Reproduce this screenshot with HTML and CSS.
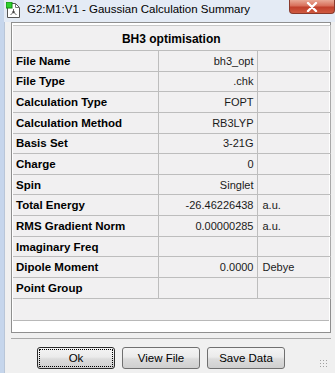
FILE: index.html
```html
<!DOCTYPE html>
<html lang="en">
<head>
    <meta charset="UTF-8">
    <title>G2:M1:V1 - Gaussian Calculation Summary</title>
    <link rel="stylesheet" href="styles.css">
</head>
<body>
    <div class="window">
        <div class="titlebar">
            <svg class="app-icon" width="15" height="17" viewBox="0 0 15 17">
                <path d="M1.5 1.5h8l4 4v10h-12z" fill="#fff" stroke="#555"/>
                <path d="M9.5 1.5v4h4" fill="none" stroke="#777"/>
                <line x1="7.5" y1="7" x2="7.5" y2="10" stroke="#666"/>
                <line x1="7.5" y1="10" x2="4.5" y2="13" stroke="#666"/>
                <line x1="7.5" y1="10" x2="10.5" y2="13" stroke="#666"/>
                <circle cx="7.5" cy="10" r="1.2" fill="#444"/>
                <rect x="0" y="0" width="6" height="6" fill="#2fd12f" stroke="#138a13"/>
            </svg>
            <span class="title-text">G2:M1:V1 - Gaussian Calculation Summary</span>
            <div class="close-btn">
                <svg width="12" height="10" viewBox="0 0 12 10">
                    <path d="M2 1l8 8M10 1l-8 8" stroke="#fff" stroke-width="2.4" stroke-linecap="round"/>
                </svg>
            </div>
        </div>

        <div class="client">
            <div class="summary-frame">
                <div class="grid-area">
                    <table class="summary">
                        <colgroup>
                            <col class="col-label">
                            <col class="col-value">
                            <col class="col-unit">
                        </colgroup>
                        <tr><th colspan="3" class="head">BH3 optimisation</th></tr>
                        <tr><td class="label">File Name</td><td class="value">bh3_opt</td><td class="unit"></td></tr>
                        <tr><td class="label">File Type</td><td class="value">.chk</td><td class="unit"></td></tr>
                        <tr><td class="label">Calculation Type</td><td class="value">FOPT</td><td class="unit"></td></tr>
                        <tr><td class="label">Calculation Method</td><td class="value">RB3LYP</td><td class="unit"></td></tr>
                        <tr><td class="label">Basis Set</td><td class="value">3-21G</td><td class="unit"></td></tr>
                        <tr><td class="label">Charge</td><td class="value">0</td><td class="unit"></td></tr>
                        <tr><td class="label">Spin</td><td class="value">Singlet</td><td class="unit"></td></tr>
                        <tr><td class="label">Total Energy</td><td class="value">-26.46226438</td><td class="unit">a.u.</td></tr>
                        <tr><td class="label">RMS Gradient Norm</td><td class="value">0.00000285</td><td class="unit">a.u.</td></tr>
                        <tr><td class="label">Imaginary Freq</td><td class="value"></td><td class="unit"></td></tr>
                        <tr><td class="label">Dipole Moment</td><td class="value">0.0000</td><td class="unit">Debye</td></tr>
                        <tr><td class="label">Point Group</td><td class="value"></td><td class="unit"></td></tr>
                    </table>
                </div>
            </div>

            <div class="separator"></div>

            <div class="button-row">
                <button class="btn btn-focus">Ok</button>
                <button class="btn">View File</button>
                <button class="btn">Save Data</button>
                <span class="grip"></span>
            </div>
        </div>
    </div>
</body>
</html>
```

FILE: styles.css
```css
* {
    margin: 0;
    padding: 0;
    box-sizing: border-box;
}

body {
    width: 335px;
    height: 373px;
    overflow: hidden;
    background: #f0f0f0;
    font-family: "Liberation Sans", Arial, sans-serif;
    color: #000;
}

.window {
    height: 373px;
    display: flex;
    flex-direction: column;
    border-left: 4px solid #c6d6ec;
    background: #f0f0f0;
}

.titlebar {
    height: 22px;
    display: flex;
    align-items: flex-start;
    background: #e4ebf5;
    position: relative;
}

.app-icon {
    margin: 2px 0 0 2px;
    flex-shrink: 0;
}

.title-text {
    margin-left: 6px;
    font-size: 11.5px;
    line-height: 18px;
    color: #000;
    white-space: nowrap;
}

/* caption button sits over the title bar corner */
.close-btn {
    position: absolute;
    top: 0;
    left: 285px;
    width: 46px;
    height: 14px;
    border: 1px solid #8a3a2c;
    border-top: none;
    border-radius: 0 0 4px 4px;
    background: linear-gradient(#e9a996 0%, #d86f5a 45%, #c1402c 55%, #cf5a40 100%);
    display: flex;
    align-items: center;
    justify-content: center;
}

.client {
    flex: 1;
    padding-left: 6px;
    border-left: 1px solid #b9c6d8;
}

.summary-frame {
    width: 320px;
    height: 311px;
    border: 1px solid #8f8f8f;
    background: #fff;
    padding: 2px 1px 0 1px;
}

.grid-area {
    height: 296px;
    background: #f1f0f1;
    border-bottom: 1px solid #b8b8b8;
}

.summary {
    width: 317px;
    table-layout: fixed;
    border-collapse: collapse;
    font-size: 11px;
}

.col-label { width: 145px; }
.col-value { width: 99px; }
.col-unit { width: 73px; }

.summary th,
.summary td {
    border: 1px solid #bdbdbd;
    height: 20.65px;
    white-space: nowrap;
    overflow: hidden;
}

.summary tr:first-child th {
    border-top-color: #c8c8c8;
}

.summary td:first-child,
.summary th {
    border-left: none;
}

.summary td:last-child {
    border-right-color: #a8a8a8;
}

.summary th.head {
    height: 25px;
    padding-top: 2px;
    font-size: 12px;
    font-weight: bold;
    text-align: center;
}

.label {
    font-weight: bold;
    font-size: 11.5px;
    padding-left: 3px;
}

.value {
    text-align: right;
    padding-right: 3px;
    color: #1a1a1a;
}

.unit {
    padding-left: 5px;
    color: #1a1a1a;
}

.separator {
    width: 320px;
    height: 1px;
    margin-top: 5px;
    background: #a9a9a9;
}

.button-row {
    display: flex;
    gap: 7px;
    padding-left: 26px;
    margin-top: 8px;
    position: relative;
}

.btn {
    width: 78px;
    height: 22px;
    border: 1px solid #707070;
    border-radius: 3px;
    background: linear-gradient(#f4f4f4 0%, #ebebeb 45%, #dcdcdc 55%, #cfcfcf 100%);
    font-family: "Liberation Sans", Arial, sans-serif;
    font-size: 11.5px;
    color: #000;
}

.btn-focus {
    border-color: #2b2b2b;
    outline: 1px dotted #000;
    outline-offset: -3px;
}

.grip {
    position: absolute;
    right: 8px;
    bottom: 2px;
    width: 8px;
    height: 8px;
    background: radial-gradient(circle, #a0a0a0 0.8px, transparent 1px) 0 0 / 3px 3px;
}
```
